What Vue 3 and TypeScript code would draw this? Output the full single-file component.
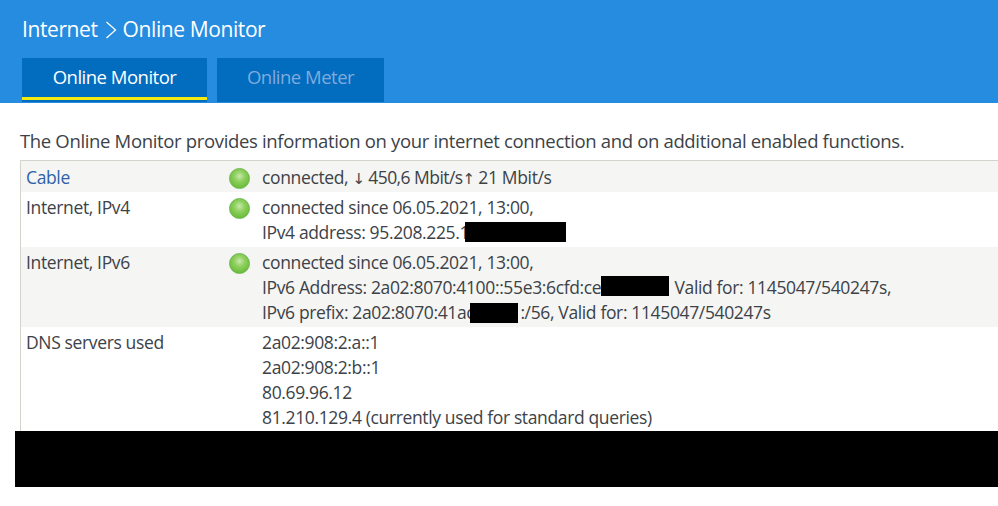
<script setup lang="ts">
const tabs = [
  { label: 'Online Monitor', active: true },
  { label: 'Online Meter', active: false },
]
</script>

<template>
  <div class="page">
    <header class="head">
      <h1 class="crumb">
        <span>Internet</span>
        <svg class="chev" width="12" height="20" viewBox="0 0 12 20"><path d="M1.5 2 L10.5 10 L1.5 18" fill="none" stroke="#fff" stroke-width="1.3" /></svg>
        <span>Online Monitor</span>
      </h1>
      <nav class="tabs">
        <a v-for="t in tabs" :key="t.label" class="tab" :class="{ active: t.active }">{{ t.label }}</a>
      </nav>
    </header>
    <main class="body">
      <p class="intro">The Online Monitor provides information on your internet connection and on additional enabled functions.</p>
      <div class="table">
        <div class="row r1 alt">
          <div class="name link">Cable</div>
          <div class="led"><i class="dot"></i></div>
          <div class="val"><div>connected, <span class="arrow">↓</span> <span class="tight">450,6 Mbit/s</span><span class="arrow up">↑</span> 21 Mbit/s</div></div>
        </div>
        <div class="row r2">
          <div class="name">Internet, IPv4</div>
          <div class="led"><i class="dot"></i></div>
          <div class="val">
            <div>connected since 06.05.2021, 13:00,</div>
            <div>IPv4 address: 95.208.225.1<span class="redact a"></span></div>
          </div>
        </div>
        <div class="row r3 alt">
          <div class="name">Internet, IPv6</div>
          <div class="led"><i class="dot"></i></div>
          <div class="val">
            <div>connected since 06.05.2021, 13:00,</div>
            <div>IPv6 Address: 2a02:8070:4100::55e3:6cfd:ce<span class="redact b"></span> Valid for: 1145047/540247s,</div>
            <div>IPv6 prefix: 2a02:8070:41ac<span class="redact c"></span>:/56, Valid for: 1145047/540247s</div>
          </div>
        </div>
        <div class="row r4">
          <div class="name">DNS servers used</div>
          <div class="led"></div>
          <div class="val">
            <div>2a02:908:2:a::1</div>
            <div>2a02:908:2:b::1</div>
            <div>80.69.96.12</div>
            <div>81.210.129.4 (currently used for standard queries)</div>
          </div>
        </div>
      </div>
      <div class="block"></div>
    </main>
  </div>
</template>

<style>
html, body { margin: 0; background: #fff; overflow: hidden; }
</style>

<style scoped>
.page {
  width: 998px;
  height: 506px;
  font-family: "Open Sans", "Noto Sans", sans-serif;
  color: #3c4248;
  overflow: hidden;
}
.head {
  height: 103px;
  background: #258cdf;
  box-sizing: border-box;
  padding: 13px 0 0 22px;
}
.crumb {
  margin: 0;
  height: 32px;
  display: flex;
  align-items: center;
  gap: 6px;
  font-size: 21px;
  font-weight: 400;
  letter-spacing: -0.4px;
  color: #fff;
}
.chev { margin-left: 1px; margin-top: 1px; }
.tabs {
  display: flex;
  gap: 10px;
  margin-top: 13px;
}
.tab {
  height: 44px;
  width: 167px;
  box-sizing: border-box;
  background: #026cbf;
  color: #7fabdc;
  font-size: 18.5px;
  letter-spacing: -0.5px;
  line-height: 38px;
  text-align: center;
}
.tab.active {
  width: 185px;
  color: #fff;
  position: relative;
}
.tab.active::after {
  content: "";
  position: absolute;
  left: 0;
  right: 0;
  bottom: 2px;
  height: 3px;
  background: #f3ea0f;
}
.body { padding: 26px 0 0 20px; }
.intro {
  margin: 0;
  font-size: 18.5px;
  line-height: 24px;
  letter-spacing: -0.34px;
  color: #3c4248;
}
.table {
  margin-top: 7px;
  border-top: 1px solid #d4d4cc;
  border-left: 1px solid #d4d4cc;
  font-size: 17.5px;
  letter-spacing: -0.36px;
}
.row {
  display: grid;
  grid-template-columns: 204px 32px 1fr;
  box-sizing: border-box;
  padding-left: 5px;
}
.alt { background: #f5f5f3; }
.r1 { height: 31px; padding-top: 4px; }
.r2 { height: 55px; padding-top: 3px; }
.r3 { height: 80px; padding-top: 3px; }
.r4 { height: 104px; padding-top: 3px; }
.name, .val { line-height: 25px; }
.val { white-space: nowrap; }
.link { color: #2f62a8; }
.led { padding-top: 3px; }
.tight { letter-spacing: -0.55px; }
.arrow {
  font-family: "DejaVu Sans", sans-serif;
  font-size: 15px;
  line-height: 20px;
  letter-spacing: -1px;
  color: #3c4248;
}
.dot {
  display: block;
  width: 21px;
  height: 21px;
  margin-left: -1px;
  border-radius: 50%;
  box-sizing: border-box;
  border: 1px solid #6db64c;
  background: radial-gradient(circle at 50% 38%, #c9e8ae 0%, #8fd05f 35%, #6cbd3c 75%, #62b038 100%);
}
.redact {
  display: inline-block;
  background: #000;
  vertical-align: top;
  position: relative;
}
.redact.a { width: 101px; height: 20px; margin-left: -4px; margin-top: 2px; }
.redact.b { width: 68px; height: 20px; margin-top: 1px; margin-right: 1px; }
.redact.c { width: 48px; height: 20px; margin-top: 3px; margin-left: -4px; margin-right: 2px; }
.block {
  height: 56px;
  width: 983px;
  margin-left: -5px;
  background: #000;
}
</style>
